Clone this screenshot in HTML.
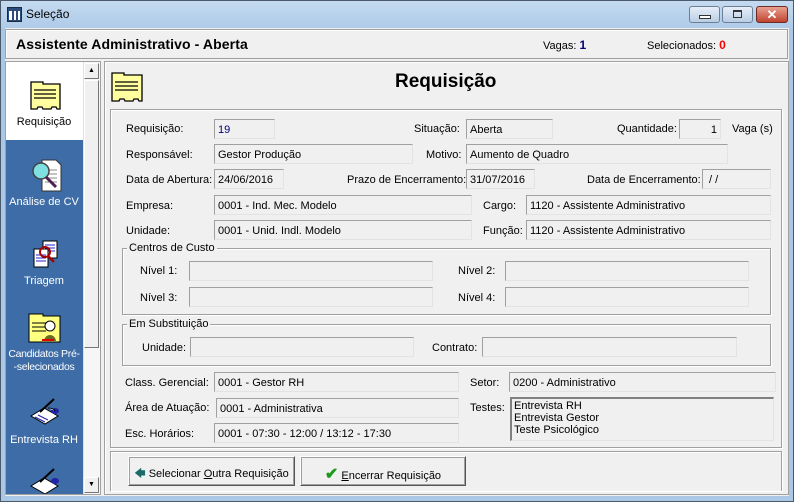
<!DOCTYPE html>
<html><head><meta charset="utf-8">
<style>
*{box-sizing:border-box;margin:0;padding:0}
body{width:794px;height:502px;overflow:hidden;background:#f0f0f0;font-family:"Liberation Sans",sans-serif;font-size:11px;color:#000;position:relative}
.a{position:absolute;white-space:nowrap}
.f{position:absolute;height:20px;border:1px solid #a0a0a0;border-right-color:#e3e3e3;border-bottom-color:#e3e3e3;background:#f0f0f0;padding:4px 0 0 3px;white-space:nowrap;overflow:hidden}
.g{position:absolute;border:1px solid #a0a0a0;box-shadow:1px 1px 0 #fff inset,1px 1px 0 #fff}
.gt{position:absolute;top:-8px;left:4px;background:#f0f0f0;padding:0 2px}
.btn{position:absolute;border:1px solid #fff;border-right-color:#555;border-bottom-color:#555;box-shadow:1px 1px 0 #a0a0a0 inset, -1px -1px 0 #a0a0a0 inset;background:#f0f0f0;text-align:center;padding-top:8px}
.sb{color:#fff;text-align:center;position:absolute;left:5px;width:78px;white-space:nowrap}
</style></head><body>
<div class="a" style="left:0;top:0;width:794px;height:502px;background:#aac8e6;border:1px solid #4a5a6a"></div>
<div class="a" style="left:1px;top:1px;width:792px;height:27px;background:linear-gradient(#c4daf0,#aecbe8)"></div>
<div class="a" style="left:7px;top:7px;width:15px;height:15px;background:#2c4c7a;border:1px solid #1a2a40"></div>
<div class="a" style="left:9px;top:11px;width:3px;height:9px;background:#fff"></div>
<div class="a" style="left:14px;top:11px;width:2px;height:9px;background:#fff"></div>
<div class="a" style="left:18px;top:11px;width:2px;height:9px;background:#fff"></div>
<div class="a" style="left:26px;top:7px;font-size:12px">Seleção</div>
<div class="a" style="left:689px;top:6px;width:31px;height:17px;border:1px solid #6d7f96;border-radius:3px;background:linear-gradient(#e6eef8,#b9cde4)"></div>
<div class="a" style="left:699px;top:15px;width:12px;height:4px;border:1px solid #333;background:#fff"></div>
<div class="a" style="left:722px;top:6px;width:31px;height:17px;border:1px solid #6d7f96;border-radius:3px;background:linear-gradient(#e6eef8,#b9cde4)"></div>
<div class="a" style="left:733px;top:10px;width:9px;height:8px;border:1px solid #333;border-top-width:2px"></div>
<div class="a" style="left:756px;top:6px;width:32px;height:17px;border:1px solid #6b2a22;border-radius:3px;background:linear-gradient(#e8a090,#c0432f);color:#fff;font-weight:bold;text-align:center;font-size:13px;line-height:15px">✕</div>
<div class="a" style="left:5px;top:28px;width:784px;height:468px;background:#f0f0f0"></div>
<div class="a" style="left:5px;top:29px;width:783px;height:30px;border:1px solid #a0a0a0;box-shadow:1px 1px 0 #fff inset"></div>
<div class="a" style="left:16px;top:36px;font-size:14px;font-weight:bold;letter-spacing:0.1px">Assistente Administrativo - Aberta</div>
<div class="a" style="left:543px;top:38px">Vagas: <b style="color:#00007a;font-size:12px">1</b></div>
<div class="a" style="left:647px;top:38px">Selecionados: <b style="color:#f00;font-size:12px">0</b></div>
<div class="a" style="left:5px;top:61px;width:96px;height:434px;border:1px solid #a0a0a0;background:#3d6ca6"></div>
<div class="a" style="left:6px;top:62px;width:77px;height:78px;background:#fff"></div>
<svg class="a" style="left:30px;top:81px" width="32" height="29"><path d="M1 1h12v2h17v25h-3l-1-2h-4l-1 2h-8l-1-2h-4l-1 2H1z" fill="#ffffa0" stroke="#000" stroke-width="1.3"/><path d="M4 9h22M4 13h22M4 17h22" stroke="#000" stroke-width="1.2"/></svg>
<div class="sb" style="top:116px;color:#000">Requisição</div>
<svg class="a" style="left:30px;top:158px" width="34" height="34"><path d="M12 2h14l5 5v26H12z" fill="#fff" stroke="#333"/><path d="M15 12h12M15 16h12M15 20h12M15 24h12" stroke="#888"/><circle cx="11" cy="13" r="8" fill="#7ee0e0" stroke="#444" stroke-width="1.5"/><path d="M16 19l10 10" stroke="#502050" stroke-width="3"/></svg>
<div class="sb" style="top:196px">Análise de CV</div>
<svg class="a" style="left:32px;top:240px" width="28" height="30"><rect x="11" y="1" width="14" height="17" fill="#fff" stroke="#000"/><path d="M13 5h10M13 8h10M13 11h10" stroke="#22c"/><rect x="2" y="9" width="14" height="18" fill="#fff" stroke="#000"/><path d="M4 15h10M4 18h10M4 21h10" stroke="#22c"/><circle cx="13" cy="12" r="5" fill="none" stroke="#a00" stroke-width="2"/><path d="M16 16l6 6" stroke="#a00" stroke-width="2.5"/></svg>
<div class="sb" style="top:275px">Triagem</div>
<svg class="a" style="left:28px;top:313px" width="34" height="30"><path d="M1 1h14v2h17v26H1z" fill="#ffff80" stroke="#000"/><path d="M4 10h14M4 14h14M4 18h14" stroke="#000"/><circle cx="22" cy="13" r="5" fill="#fff" stroke="#000"/><path d="M16 28c1-8 11-8 12 0z" fill="#6a6a20"/><path d="M14 27h12" stroke="#d00" stroke-width="2"/></svg>
<div class="sb" style="top:348px;line-height:13px;font-size:10.5px;letter-spacing:-0.3px">Candidatos Pré-<br>-selecionados</div>
<svg class="a" style="left:28px;top:398px" width="34" height="30"><path d="M3 18l13-8 14 8-13 8z" fill="#fff" stroke="#000"/><path d="M7 19l10 5M10 17l10 5" stroke="#22a"/><path d="M12 14l14-13" stroke="#000" stroke-width="2"/><ellipse cx="27" cy="13" rx="4" ry="3" fill="#22a"/><path d="M20 10c3 0 6 1 7 3" stroke="#000" fill="#fff"/></svg>
<div class="sb" style="top:434px">Entrevista RH</div>
<svg class="a" style="left:28px;top:468px" width="34" height="26"><path d="M3 18l13-8 14 8-13 8z" fill="#fff" stroke="#000"/><path d="M12 14l14-13" stroke="#000" stroke-width="2"/><ellipse cx="27" cy="13" rx="4" ry="3" fill="#22a"/></svg>
<div class="a" style="left:83px;top:62px;width:17px;height:432px;background:#f6f6f6;border-left:1px solid #e0e0e0"></div>
<div class="a" style="left:84px;top:63px;width:15px;height:16px;border:1px solid #fff;border-right-color:#777;border-bottom-color:#777;font-size:7px;text-align:center;line-height:13px;background:#f0f0f0">▲</div>
<div class="a" style="left:84px;top:80px;width:15px;height:268px;border:1px solid #fff;border-right-color:#777;border-bottom-color:#777;background:#f0f0f0"></div>
<div class="a" style="left:84px;top:477px;width:15px;height:16px;border:1px solid #fff;border-right-color:#777;border-bottom-color:#777;font-size:7px;text-align:center;line-height:13px;background:#f0f0f0">▼</div>
<div class="a" style="left:104px;top:61px;width:685px;height:434px;border:1px solid #a0a0a0;box-shadow:1px 1px 0 #fff inset"></div>
<svg class="a" style="left:111px;top:72px" width="33" height="30"><path d="M1 1h12v2h18v26h-3l-1-2h-4l-1 2h-8l-1-2h-4l-1 2H1z" fill="#ffffa0" stroke="#000" stroke-width="1.3"/><path d="M4 10h23M4 14h23M4 18h23" stroke="#000" stroke-width="1.2"/></svg>
<div class="a" style="left:395px;top:71px;font-size:19px;font-weight:bold">Requisição</div>
<div class="g" style="left:110px;top:109px;width:672px;height:339px"></div>
<div class="g" style="left:110px;top:451px;width:672px;height:40px;border-bottom:none"></div>

<div class="a" style="left:126px;top:123px">Requisição:</div>
<div class="f" style="left:214px;top:119px;width:61px;color:#00007a">19</div>
<div class="a" style="left:414px;top:123px">Situação:</div>
<div class="f" style="left:466px;top:119px;width:87px">Aberta</div>
<div class="a" style="left:617px;top:123px">Quantidade:</div>
<div class="f" style="left:679px;top:119px;width:42px;text-align:right;padding-right:3px">1</div>
<div class="a" style="left:732px;top:123px">Vaga (s)</div>

<div class="a" style="left:126px;top:149px">Responsável:</div>
<div class="f" style="left:214px;top:144px;width:199px">Gestor Produção</div>
<div class="a" style="left:426px;top:149px">Motivo:</div>
<div class="f" style="left:466px;top:144px;width:262px">Aumento de Quadro</div>

<div class="a" style="left:126px;top:174px">Data de Abertura:</div>
<div class="f" style="left:214px;top:169px;width:70px">24/06/2016</div>
<div class="a" style="left:347px;top:174px">Prazo de Encerramento:</div>
<div class="f" style="left:466px;top:169px;width:69px">31/07/2016</div>
<div class="a" style="left:587px;top:174px">Data de Encerramento:</div>
<div class="f" style="left:702px;top:169px;width:69px">&nbsp;/ /</div>

<div class="a" style="left:126px;top:200px">Empresa:</div>
<div class="f" style="left:214px;top:195px;width:258px">0001 - Ind. Mec. Modelo</div>
<div class="a" style="left:483px;top:200px">Cargo:</div>
<div class="f" style="left:526px;top:195px;width:245px">1120 - Assistente Administrativo</div>

<div class="a" style="left:126px;top:225px">Unidade:</div>
<div class="f" style="left:214px;top:220px;width:258px">0001 - Unid. Indl. Modelo</div>
<div class="a" style="left:483px;top:225px">Função:</div>
<div class="f" style="left:526px;top:220px;width:245px">1120 - Assistente Administrativo</div>

<div class="g" style="left:122px;top:248px;width:649px;height:67px"><span class="gt" style="top:-7px">Centros de Custo</span></div>
<div class="a" style="left:140px;top:265px">Nível 1:</div>
<div class="f" style="left:189px;top:261px;width:244px"></div>
<div class="a" style="left:458px;top:265px">Nível 2:</div>
<div class="f" style="left:505px;top:261px;width:244px"></div>
<div class="a" style="left:140px;top:292px">Nível 3:</div>
<div class="f" style="left:189px;top:287px;width:244px"></div>
<div class="a" style="left:458px;top:292px">Nível 4:</div>
<div class="f" style="left:505px;top:287px;width:244px"></div>

<div class="g" style="left:122px;top:324px;width:649px;height:42px"><span class="gt" style="top:-7px">Em Substituição</span></div>
<div class="a" style="left:142px;top:342px">Unidade:</div>
<div class="f" style="left:190px;top:337px;width:224px"></div>
<div class="a" style="left:432px;top:342px">Contrato:</div>
<div class="f" style="left:482px;top:337px;width:255px"></div>

<div class="a" style="left:125px;top:377px">Class. Gerencial:</div>
<div class="f" style="left:214px;top:372px;width:245px">0001 - Gestor RH</div>
<div class="a" style="left:470px;top:377px">Setor:</div>
<div class="f" style="left:509px;top:372px;width:267px">0200 - Administrativo</div>

<div class="a" style="left:125px;top:402px">Área de Atuação:</div>
<div class="f" style="left:216px;top:398px;width:243px">0001 - Administrativa</div>
<div class="a" style="left:470px;top:402px">Testes:</div>
<div class="a" style="left:510px;top:397px;width:264px;height:44px;border:2px solid #808080;border-right:1px solid #e3e3e3;border-bottom:1px solid #e3e3e3;padding:1px 0 0 2px;line-height:12px">Entrevista RH<br>Entrevista Gestor<br>Teste Psicológico</div>

<div class="a" style="left:125px;top:428px">Esc. Horários:</div>
<div class="f" style="left:214px;top:423px;width:245px">0001 - 07:30 - 12:00 / 13:12 - 17:30</div>

<div class="btn" style="left:128px;top:456px;width:167px;height:30px"><span style="color:#1a6a6a">🡄</span> Selecionar <u>O</u>utra Requisição</div>
<div class="btn" style="left:300px;top:456px;width:166px;height:30px;padding-top:7px"><span style="color:#1a9a1a;font-size:16px;font-weight:bold">✔</span> <u>E</u>ncerrar Requisição</div>
</body></html>
